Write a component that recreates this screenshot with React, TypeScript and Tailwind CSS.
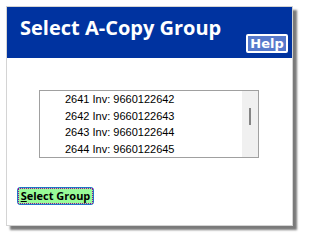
const items = [
  '2641 Inv: 9660122642',
  '2642 Inv: 9660122643',
  '2643 Inv: 9660122644',
  '2644 Inv: 9660122645',
]

export default function App() {
  return (
    <div className="h-[237px] w-[304px] bg-white pl-[6px] pt-[6px]">
      <div className="h-[220px] w-[287px] border border-[#d4d4d4] bg-white shadow-[4px_4px_2px_#7a7a7a]">
        <div className="flex h-[51px] items-start justify-between bg-[#0033a0] pl-[13px] pr-[4px]">
          <h1 className="mt-[7px] font-['Open_Sans'] text-[20px] font-bold leading-[28px] text-white">
            Select A-Copy Group
          </h1>
          <button className="mt-[27px] h-[19px] w-[42px] rounded-[2px] border-2 border-white bg-[#5679cc] font-['DejaVu_Sans'] text-[13px] font-bold leading-[15px] text-white">
            Help
          </button>
        </div>
        <div className="pl-[32px] pt-[32px]">
          <div className="flex h-[68px] w-[220px] border border-[#a0a0a0] bg-white">
            <ul className="flex-1 pl-[25px] font-['Liberation_Sans'] text-[11px] text-black">
              {items.map((item) => (
                <li key={item} className="h-[16.5px] leading-[16.5px]">
                  {item}
                </li>
              ))}
            </ul>
            <div className="flex w-[16px] justify-center bg-[#f0f0f0] pt-[17px]">
              <div className="h-[17px] w-[2px] bg-[#858585]" />
            </div>
          </div>
        </div>
        <div className="pl-[10px] pt-[29px]">
          <button className="block h-[18px] w-[77px] rounded-[3px] border border-[#1f78c8] bg-[#98fb98] p-[1px]">
            <span className="block h-full w-full whitespace-nowrap text-center font-['Open_Sans'] text-[11px] font-bold leading-[14px] text-black outline-1 outline-dotted outline-[#9b009b]">
              <span className="underline">S</span>elect Group
            </span>
          </button>
        </div>
      </div>
    </div>
  )
}
